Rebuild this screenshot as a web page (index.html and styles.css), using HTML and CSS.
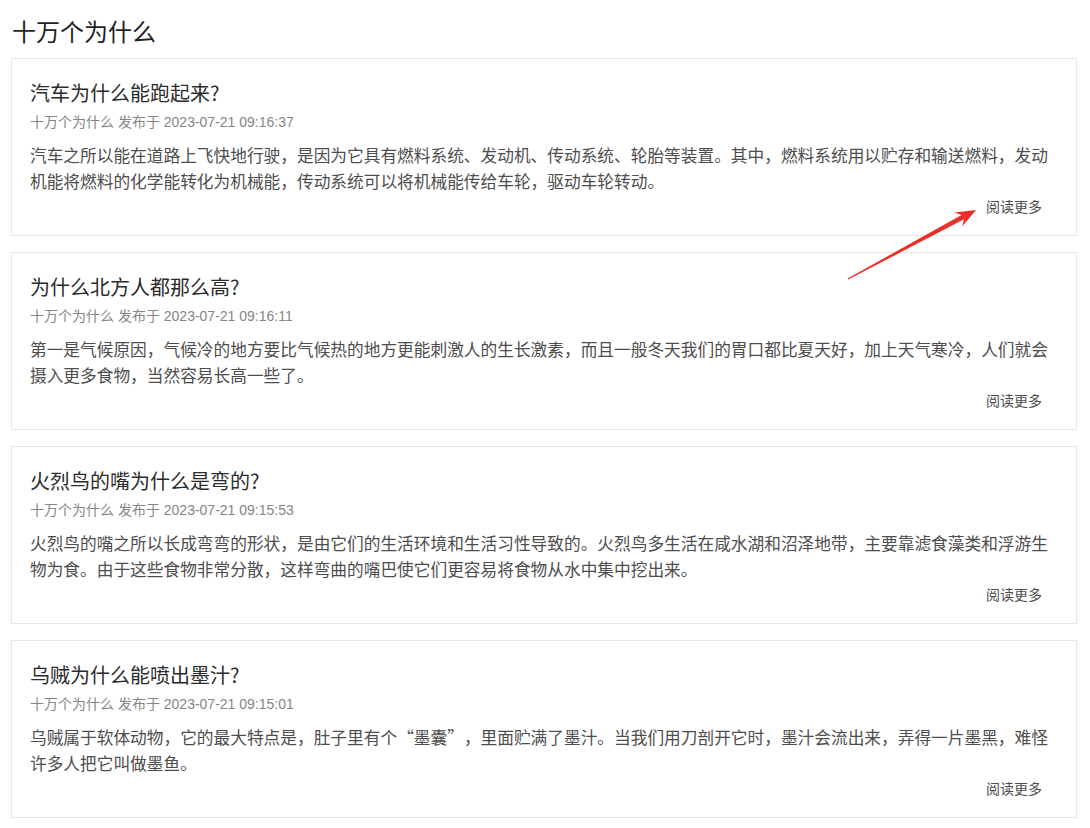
FILE: index.html
```html
<!DOCTYPE html>
<html lang="zh-CN">
<head>
<meta charset="utf-8">
<title>十万个为什么</title>
<link rel="stylesheet" href="styles.css">
</head>
<body>
<div class="page">
  <h1 class="page-title">十万个为什么</h1>
  <div class="list">
    <article class="card">
      <h2 class="card-title">汽车为什么能跑起来?</h2>
      <div class="meta">十万个为什么 发布于 2023-07-21 09:16:37</div>
      <p class="summary">汽车之所以能在道路上飞快地行驶，是因为它具有燃料系统、发动机、传动系统、轮胎等装置。其中，燃料系统用以贮存和输送燃料，发动机能将燃料的化学能转化为机械能，传动系统可以将机械能传给车轮，驱动车轮转动。</p>
      <div class="more-row"><a class="more">阅读更多</a></div>
    </article>
    <article class="card">
      <h2 class="card-title">为什么北方人都那么高?</h2>
      <div class="meta">十万个为什么 发布于 2023-07-21 09:16:11</div>
      <p class="summary">第一是气候原因，气候冷的地方要比气候热的地方更能刺激人的生长激素，而且一般冬天我们的胃口都比夏天好，加上天气寒冷，人们就会摄入更多食物，当然容易长高一些了。</p>
      <div class="more-row"><a class="more">阅读更多</a></div>
    </article>
    <article class="card">
      <h2 class="card-title">火烈鸟的嘴为什么是弯的?</h2>
      <div class="meta">十万个为什么 发布于 2023-07-21 09:15:53</div>
      <p class="summary">火烈鸟的嘴之所以长成弯弯的形状，是由它们的生活环境和生活习性导致的。火烈鸟多生活在咸水湖和沼泽地带，主要靠滤食藻类和浮游生物为食。由于这些食物非常分散，这样弯曲的嘴巴使它们更容易将食物从水中集中挖出来。</p>
      <div class="more-row"><a class="more">阅读更多</a></div>
    </article>
    <article class="card">
      <h2 class="card-title">乌贼为什么能喷出墨汁?</h2>
      <div class="meta">十万个为什么 发布于 2023-07-21 09:15:01</div>
      <p class="summary">乌贼属于软体动物，它的最大特点是，肚子里有个<span class="q-open">“</span>墨囊<span class="q-close">”</span>，里面贮满了墨汁。当我们用刀剖开它时，墨汁会流出来，弄得一片墨黑，难怪许多人把它叫做墨鱼。</p>
      <div class="more-row"><a class="more">阅读更多</a></div>
    </article>
  </div>
</div>
<svg class="annot-arrow" width="1090" height="828" viewBox="0 0 1090 828" aria-hidden="true">
  <polygon points="848.3,279.5 964.0,219.3 962.2,226.5 976,210 954.6,212.5 961.6,214.9 847.7,278.5" fill="#ea2f2a"/>
</svg>
</body>
</html>
```

FILE: styles.css
```css
html, body {
  margin: 0;
  padding: 0;
  background: #ffffff;
}

body {
  font-family: "Liberation Sans", "Noto Sans CJK SC", sans-serif;
  color: #333333;
  position: relative;
  min-height: 828px;
}

.page {
  padding: 14px 13px 0 11px;
}

.page-title {
  margin: 0 0 10px 1px;
  font-size: 24px;
  line-height: 34px;
  font-weight: normal;
  color: #1f1f1f;
  font-family: "Noto Sans CJK SC", sans-serif;
}

.list {
  display: flex;
  flex-direction: column;
  gap: 16px;
}

.card {
  border: 1px solid #e6e6e6;
  background: #ffffff;
  padding: 20px 18px 19px 18px;
}

.card-title {
  margin: 0;
  font-size: 20px;
  line-height: 28px;
  font-weight: normal;
  color: #2b2b2b;
  font-family: "Noto Sans CJK SC", sans-serif;
}

.meta {
  margin-top: 5px;
  font-size: 14px;
  line-height: 20px;
  color: #858585;
}

.summary {
  margin: 10px 0 0 0;
  font-size: 16.7px;
  line-height: 26px;
  color: #4d4d4d;
  font-family: "Noto Sans CJK SC", sans-serif;
}

.q-open,
.q-close {
  display: inline-block;
  width: 1em;
}

.q-open {
  text-align: right;
}

.q-close {
  text-align: left;
}

.more-row {
  display: flex;
  justify-content: flex-end;
  margin-top: 2px;
  padding-right: 16px;
}

.more {
  font-size: 14px;
  line-height: 20px;
  color: #4d4d4d;
  font-family: "Noto Sans CJK SC", sans-serif;
  cursor: pointer;
}

.annot-arrow {
  position: absolute;
  left: 0;
  top: 0;
  pointer-events: none;
}
```
